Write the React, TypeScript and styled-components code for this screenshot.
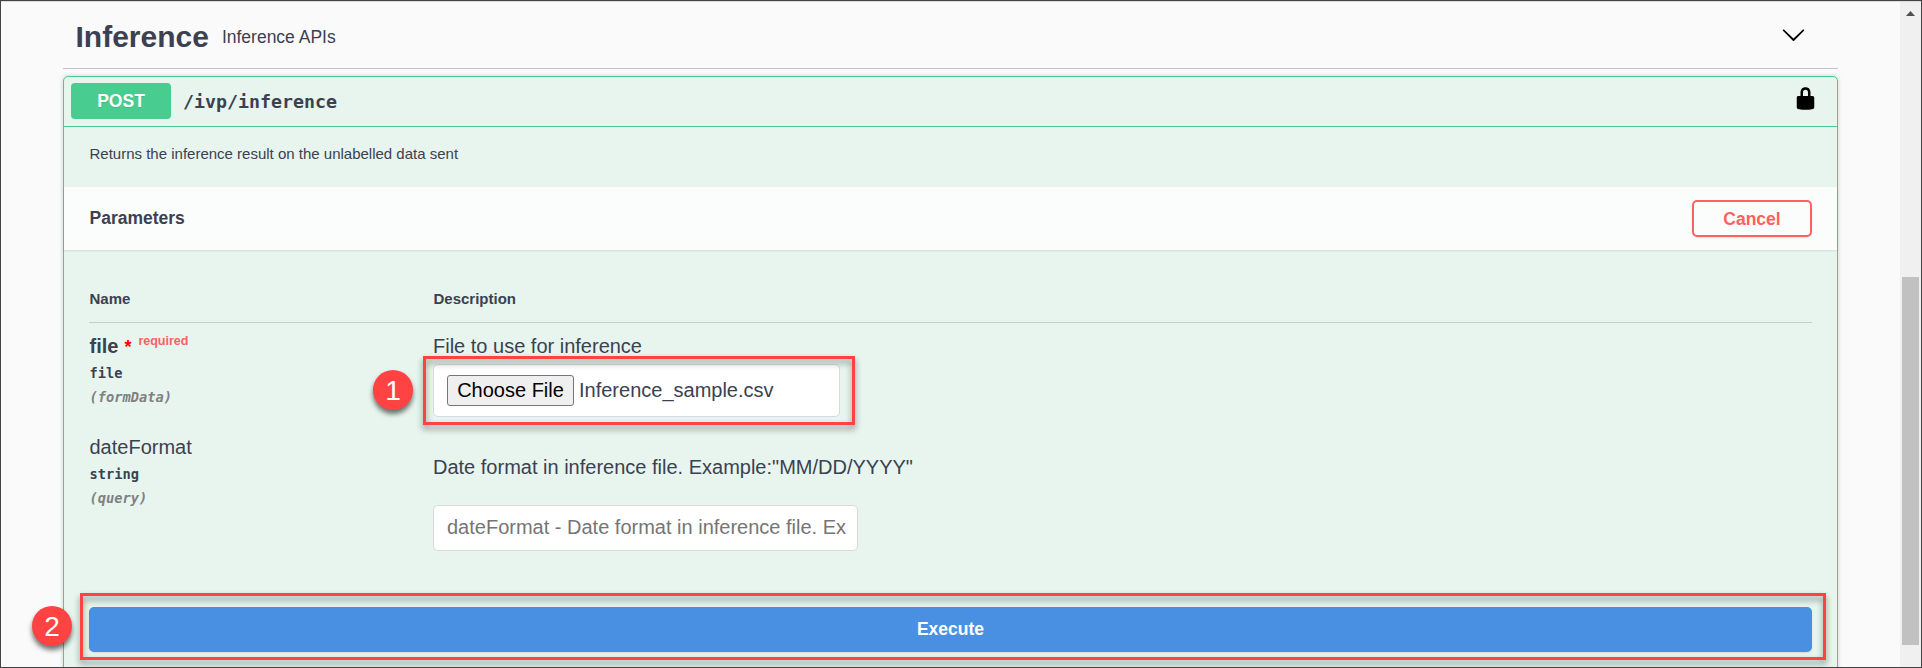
import React from 'react';
import styled, { createGlobalStyle } from 'styled-components';

const ink = '#3b4151';
const green = '#49cc90';
const red = '#ff4343';
const sans = '"Liberation Sans", Arial, sans-serif';
const mono = '"DejaVu Sans Mono", monospace';

const GlobalStyle = createGlobalStyle`
  * { box-sizing: border-box; }
  body { margin: 0; background: #fafafa; font-family: ${sans}; color: ${ink}; overflow: hidden; }
  h2, h3, p { margin: 0; }
`;

const Frame = styled.div`
  display: flex;
  height: 668px;
  border: 1px solid #434343;
  overflow: hidden;
  box-shadow: inset 0 1px 0 #dcdcdc;
`;

const Page = styled.main`
  flex: 1;
  padding: 0 62px;
`;

const Scrollbar = styled.aside`
  width: 21px;
  display: flex;
  flex-direction: column;
  align-items: flex-start;
  background: #f0f0f0;
  margin-top: 1px;
`;

const ScrollArrow = styled.svg`
  width: 9px;
  height: 5px;
  margin-top: 9px;
  margin-left: 6px;
`;

const ScrollThumb = styled.div`
  width: 17px;
  height: 368px;
  margin-top: 261px;
  margin-left: 2px;
  background: #c1c1c1;
`;

const TagHeader = styled.header`
  display: flex;
  align-items: center;
  height: 68px;
  padding: 4px 32px 0 12.5px;
  border-bottom: 1px solid #c1c3c8;
`;

const TagName = styled.h2`
  font-size: 30px;
  line-height: 36px;
`;

const TagInfo = styled.span`
  flex: 1;
  margin-left: 13px;
  padding-top: 1px;
  font-size: 17.5px;
`;

const Icon = styled.svg`
  width: 25px;
  height: 25px;
  fill: #000;
`;

const ChevronIcon = styled(Icon)`
  margin-bottom: 5px;
`;

const Operation = styled.section`
  height: 620px;
  margin-top: 7px;
  border: 1px solid ${green};
  border-radius: 5px;
  background: #e7f5ee;
  box-shadow: 0 0 4px rgba(0, 0, 0, 0.19);
`;

const Summary = styled.div`
  display: flex;
  align-items: center;
  height: 50px;
  padding: 0 19px 1px 7px;
  border-bottom: 1px solid ${green};
`;

const Method = styled.span`
  width: 100px;
  border-radius: 4px;
  background: ${green};
  color: #fff;
  font-size: 17.5px;
  font-weight: 700;
  line-height: 36px;
  text-align: center;
  text-shadow: 0 1px 0 rgba(0, 0, 0, 0.1);
`;

const Path = styled.span`
  flex: 1;
  margin-left: 12px;
  font: 700 18.27px/24px ${mono};
  padding-top: 1px;
`;

const LockIcon = styled(Icon)`
  margin-bottom: 6px;
`;

const SummaryText = styled.p`
  height: 60px;
  padding: 17px 25.5px;
  font-size: 15px;
  line-height: 20px;
`;

const SectionHeader = styled.div`
  display: flex;
  align-items: center;
  justify-content: space-between;
  height: 63px;
  padding: 0 25px 0 25.5px;
  background: #fbfdfc;
  box-shadow: 0 1px 2px rgba(0, 0, 0, 0.1);
`;

const SectionTitle = styled.h3`
  padding-bottom: 2px;
  font-size: 17.5px;
  line-height: 20px;
`;

const CancelButton = styled.button`
  width: 120px;
  height: 37px;
  padding: 1px 0 0;
  border: 2px solid #ff6060;
  border-radius: 5px;
  background: transparent;
  box-shadow: 0 1px 2px rgba(0, 0, 0, 0.1);
  color: #ff6060;
  font: 700 17.5px ${sans};
`;

const Parameters = styled.div`
  padding: 40px 25px 0;
`;

const Row = styled.div`
  display: grid;
  grid-template-columns: 344px 1fr;
`;

const HeadRow = styled(Row)`
  height: 33px;
  padding-left: 0.5px;
  border-bottom: 1px solid #c2d0cb;
  font-size: 15px;
  font-weight: 700;
  line-height: 18px;
`;

const ParamRow = styled(Row)<{ $height: number }>`
  height: ${(p) => p.$height}px;
  padding-top: 11px;
`;

const ParamLabel = styled.div`
  padding-left: 0.5px;
`;

const ParamName = styled.div<{ $required?: boolean }>`
  height: 24px;
  margin-bottom: 3px;
  font-size: 20px;
  font-weight: ${(p) => (p.$required ? 700 : 400)};
  line-height: 24px;
`;

const Star = styled.span`
  color: #f00;
  margin-left: 6px;
  font-size: 18px;
`;

const Required = styled.sup`
  position: relative;
  top: -8px;
  margin-left: 7px;
  color: #fb6161;
  font-size: 12.5px;
  line-height: 0;
  vertical-align: baseline;
`;

const ParamMeta = styled.div<{ $muted?: boolean }>`
  font: ${(p) => (p.$muted ? 'italic' : 'normal')} 700 13.7px/24px ${mono};
  color: ${(p) => (p.$muted ? '#808080' : ink)};
`;

const ParamText = styled.p<{ $top?: number; $bottom: number }>`
  margin: ${(p) => p.$top ?? 0}px 0 ${(p) => p.$bottom}px;
  font-size: 20px;
  line-height: 24px;
`;

const FileField = styled.div`
  position: relative;
  display: flex;
  align-items: center;
  width: 407px;
  height: 53px;
  padding-left: 13px;
  border: 1px solid #d9d9d9;
  border-radius: 5px;
  background: #fff;
  font-size: 20px;
`;

const ChooseButton = styled.button`
  width: 127px;
  height: 31px;
  margin-right: 5px;
  padding: 0;
  border: 1px solid #767676;
  border-radius: 3px;
  background: #efefef;
  color: #000;
  font: 20px ${sans};
`;

const TextField = styled.div`
  width: 425px;
  height: 46px;
  padding: 0 12px 0 13px;
  border: 1px solid #d9d9d9;
  border-radius: 5px;
  background: #fff;
`;

const Placeholder = styled.span`
  display: block;
  white-space: nowrap;
  color: #757575;
  font-size: 20px;
  line-height: 42px;
`;

const ExecuteRow = styled.div`
  position: relative;
  margin: 0 25px;
`;

const ExecuteButton = styled.button`
  display: block;
  width: 100%;
  height: 45px;
  border: 0;
  border-radius: 5px;
  background: #4990e2;
  color: #fff;
  font: 700 17.5px ${sans};
  box-shadow: 0 1px 2px rgba(0, 0, 0, 0.1);
`;

const Highlight = styled.div<{ $inset: string }>`
  position: absolute;
  inset: ${(p) => p.$inset};
  border: 3px solid ${red};
  filter: drop-shadow(0 4px 3px rgba(0, 0, 0, 0.45));
  pointer-events: none;
`;

const StepBadge = styled.span<{ $left: number; $top: number }>`
  position: absolute;
  left: ${(p) => p.$left}px;
  top: ${(p) => p.$top}px;
  width: 40px;
  height: 40px;
  border-radius: 50%;
  background: ${red};
  box-shadow: 0 4px 5px rgba(0, 0, 0, 0.55);
  color: #fff;
  font-size: 28px;
  line-height: 41px;
  text-align: center;
`;

export default function App() {
  return (
    <>
      <GlobalStyle />
      <Frame>
        <Page>
          <TagHeader>
            <TagName>Inference</TagName>
            <TagInfo>Inference APIs</TagInfo>
            <ChevronIcon viewBox="0 0 20 20">
              <path d="M17.418 6.109c.272-.268.709-.268.979 0s.271.701 0 .969l-7.908 7.83c-.27.268-.707.268-.979 0l-7.908-7.83c-.27-.268-.27-.701 0-.969.271-.268.709-.268.979 0L10 13.25l7.418-7.141z" />
            </ChevronIcon>
          </TagHeader>
          <Operation>
            <Summary>
              <Method>POST</Method>
              <Path>/ivp/inference</Path>
              <LockIcon viewBox="0 0 20 20">
                <path d="M15.8 8H14V5.6C14 2.703 12.665 1 10 1 7.334 1 6 2.703 6 5.6V8H4c-.553 0-1 .646-1 1.199V17c0 .549.428 1.139.951 1.307l1.197.387C5.672 18.861 6.55 19 7.1 19h5.8c.549 0 1.428-.139 1.951-.307l1.196-.387c.524-.167.953-.757.953-1.306V9.199C17 8.646 16.352 8 15.8 8zM12 8H8V5.199C8 3.754 8.797 3 10 3c1.203 0 2 .754 2 2.199V8z" />
              </LockIcon>
            </Summary>
            <SummaryText>Returns the inference result on the unlabelled data sent</SummaryText>
            <SectionHeader>
              <SectionTitle>Parameters</SectionTitle>
              <CancelButton>Cancel</CancelButton>
            </SectionHeader>
            <Parameters>
              <HeadRow>
                <span>Name</span>
                <span>Description</span>
              </HeadRow>
              <ParamRow $height={101}>
                <ParamLabel>
                  <ParamName $required>
                    file<Star>*</Star>
                    <Required>required</Required>
                  </ParamName>
                  <ParamMeta>file</ParamMeta>
                  <ParamMeta $muted>(formData)</ParamMeta>
                </ParamLabel>
                <div>
                  <ParamText $bottom={6}>File to use for inference</ParamText>
                  <FileField>
                    <ChooseButton>Choose File</ChooseButton>
                    Inference_sample.csv
                    <Highlight $inset="-9px -16px -9px -11px" />
                    <StepBadge $left={-61} $top={5}>1</StepBadge>
                  </FileField>
                </div>
              </ParamRow>
              <ParamRow $height={183}>
                <ParamLabel>
                  <ParamName>dateFormat</ParamName>
                  <ParamMeta>string</ParamMeta>
                  <ParamMeta $muted>(query)</ParamMeta>
                </ParamLabel>
                <div>
                  <ParamText $top={20} $bottom={26}>
                    Date format in inference file. Example:"MM/DD/YYYY"
                  </ParamText>
                  <TextField>
                    <Placeholder>dateFormat - Date format in inference file. Ex</Placeholder>
                  </TextField>
                </div>
              </ParamRow>
            </Parameters>
            <ExecuteRow>
              <ExecuteButton>Execute</ExecuteButton>
              <Highlight $inset="-14px -14px -8px -9px" />
              <StepBadge $left={-57} $top={-1}>2</StepBadge>
            </ExecuteRow>
          </Operation>
        </Page>
        <Scrollbar>
          <ScrollArrow viewBox="0 0 9 5">
            <path d="M4.5 0L9 5H0z" fill="#505050" />
          </ScrollArrow>
          <ScrollThumb />
        </Scrollbar>
      </Frame>
    </>
  );
}
